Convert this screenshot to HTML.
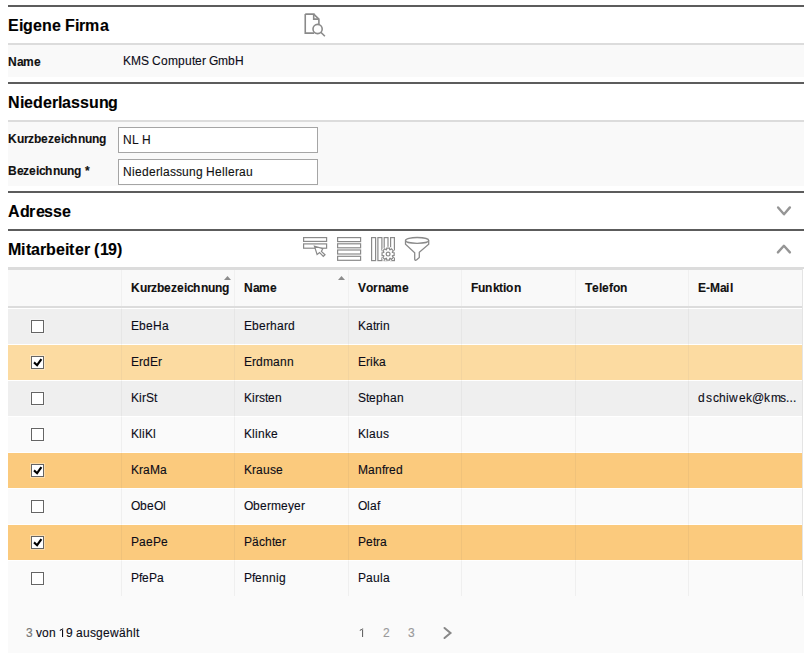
<!DOCTYPE html>
<html><head><meta charset="utf-8">
<style>
*{box-sizing:border-box}
html,body{margin:0;padding:0;background:#fff}
body{width:811px;height:657px;position:relative;overflow:hidden;font-family:"Liberation Sans",sans-serif;color:#1e1e1e}
.abs{position:absolute}
.t{position:absolute;white-space:nowrap}
.t i{display:inline-block;font-style:normal;text-align:left;overflow:visible}
.t{-webkit-text-stroke:0.12px currentColor}
.dline{position:absolute;left:8px;width:796px;height:2px;background:#5c5c5c}
.lline{position:absolute;left:8px;width:796px;height:2px;background:#dcdcdc}
.bg{position:absolute;left:8px;width:796px;background:#f9f9f9}
.inp{position:absolute;left:118px;width:200px;height:26px;border:1px solid #a5a5a5;background:#fff}
.cb{position:absolute;width:13px;height:13px;border:1px solid #656565;background:#fff;box-shadow:0 0 0 1px rgba(255,255,255,.35)}
</style></head><body>

<div class="dline" style="top:5px"></div>
<div class="t" style="left:8px;top:17px;font-size:16px;line-height:18px;font-weight:bold;color:#000;"><i style="width:11px">E</i><i style="width:4px">i</i><i style="width:10px">g</i><i style="width:9px">e</i><i style="width:10px">n</i><i style="width:8px">e</i><i style="width:5px">&nbsp;</i><i style="width:10px">F</i><i style="width:4px">i</i><i style="width:6px">r</i><i style="width:15px">m</i><i style="width:8px">a</i></div>
<svg class="abs" style="left:300px;top:10px" width="30" height="30" viewBox="0 0 30 30" fill="none" stroke="#8a8a8a" stroke-width="1.6">
 <path d="M13.7 4.1 L18.9 9.1 V14.6"/><path d="M5.25 4.1 H13.7 V9.1 H18.9"/><path d="M5.25 4.1 V23.1 H14.2"/>
 <circle cx="17.6" cy="19" r="4.6"/><path d="M20.8 22.2 L24.9 26.3"/>
</svg>
<div class="lline" style="top:43px"></div>
<div class="bg" style="top:45px;height:32px"></div>
<div class="t" style="left:8px;top:55px;font-size:12px;line-height:14px;font-weight:bold;color:#111;"><i style="width:9px">N</i><i style="width:6px">a</i><i style="width:11px">m</i><i style="width:6px">e</i></div>
<div class="t" style="left:123px;top:54px;font-size:12px;line-height:14px;color:#0c0c18;"><i style="width:8px">K</i><i style="width:10px">M</i><i style="width:8px">S</i><i style="width:3px">&nbsp;</i><i style="width:9px">C</i><i style="width:7px">o</i><i style="width:10px">m</i><i style="width:7px">p</i><i style="width:7px">u</i><i style="width:3px">t</i><i style="width:7px">e</i><i style="width:4px">r</i><i style="width:3px">&nbsp;</i><i style="width:9px">G</i><i style="width:10px">m</i><i style="width:7px">b</i><i style="width:9px">H</i></div>
<div class="dline" style="top:82px"></div>
<div class="t" style="left:8px;top:94px;font-size:16px;line-height:18px;font-weight:bold;color:#000;"><i style="width:12px">N</i><i style="width:4px">i</i><i style="width:9px">e</i><i style="width:10px">d</i><i style="width:9px">e</i><i style="width:6px">r</i><i style="width:4px">l</i><i style="width:9px">a</i><i style="width:9px">s</i><i style="width:9px">s</i><i style="width:10px">u</i><i style="width:9px">n</i><i style="width:10px">g</i></div>
<div class="lline" style="top:120px"></div>
<div class="bg" style="top:122px;height:64px"></div>
<div class="t" style="left:8px;top:132px;font-size:12px;line-height:14px;font-weight:bold;color:#111;"><i style="width:9px">K</i><i style="width:7px">u</i><i style="width:4px">r</i><i style="width:6px">z</i><i style="width:7px">b</i><i style="width:7px">e</i><i style="width:6px">z</i><i style="width:7px">e</i><i style="width:3px">i</i><i style="width:6px">c</i><i style="width:8px">h</i><i style="width:7px">n</i><i style="width:7px">u</i><i style="width:7px">n</i><i style="width:8px">g</i></div>
<div class="inp" style="top:127px"></div>
<div class="t" style="left:123px;top:133px;font-size:12px;line-height:14px;color:#111;"><i style="width:9px">N</i><i style="width:7px">L</i><i style="width:3px">&nbsp;</i><i style="width:9px">H</i></div>
<div class="t" style="left:8px;top:164px;font-size:12px;line-height:14px;font-weight:bold;color:#111;"><i style="width:9px">B</i><i style="width:6px">e</i><i style="width:6px">z</i><i style="width:7px">e</i><i style="width:3px">i</i><i style="width:6px">c</i><i style="width:8px">h</i><i style="width:7px">n</i><i style="width:7px">u</i><i style="width:7px">n</i><i style="width:8px">g</i><i style="width:3px">&nbsp;</i><i style="width:4px">*</i></div>
<div class="inp" style="top:159px"></div>
<div class="t" style="left:123px;top:165px;font-size:12px;line-height:14px;color:#111;"><i style="width:9px">N</i><i style="width:3px">i</i><i style="width:7px">e</i><i style="width:7px">d</i><i style="width:7px">e</i><i style="width:4px">r</i><i style="width:3px">l</i><i style="width:7px">a</i><i style="width:6px">s</i><i style="width:6px">s</i><i style="width:7px">u</i><i style="width:7px">n</i><i style="width:7px">g</i><i style="width:3px">&nbsp;</i><i style="width:9px">H</i><i style="width:7px">e</i><i style="width:3px">l</i><i style="width:3px">l</i><i style="width:7px">e</i><i style="width:4px">r</i><i style="width:7px">a</i><i style="width:7px">u</i></div>
<div class="dline" style="top:191px"></div>
<div class="t" style="left:8px;top:203px;font-size:16px;line-height:18px;font-weight:bold;color:#000;"><i style="width:12px">A</i><i style="width:9px">d</i><i style="width:7px">r</i><i style="width:8px">e</i><i style="width:9px">s</i><i style="width:9px">s</i><i style="width:9px">e</i></div>
<svg class="abs" style="left:772px;top:200px" width="24" height="24" viewBox="0 0 24 24" fill="none" stroke="#959595" stroke-width="2.4" stroke-linecap="round" stroke-linejoin="round"><path d="M6.1 7.5 L12 14.3 L17.9 7.4"/></svg>
<div class="dline" style="top:229px"></div>
<div class="t" style="left:8px;top:241px;font-size:16px;line-height:18px;font-weight:bold;color:#000;"><i style="width:13px">M</i><i style="width:5px">i</i><i style="width:5px">t</i><i style="width:9px">a</i><i style="width:6px">r</i><i style="width:10px">b</i><i style="width:9px">e</i><i style="width:4px">i</i><i style="width:6px">t</i><i style="width:9px">e</i><i style="width:6px">r</i><i style="width:4px">&nbsp;</i><i style="width:6px">(</i><i style="width:8px">1</i><i style="width:9px">9</i><i style="width:6px">)</i></div>
<svg class="abs" style="left:772px;top:236px" width="24" height="24" viewBox="0 0 24 24" fill="none" stroke="#959595" stroke-width="2.4" stroke-linecap="round" stroke-linejoin="round"><path d="M5.9 16.4 L11.9 9.8 L17.9 16.4"/></svg>
<svg class="abs" style="left:300px;top:234px" width="30" height="30" viewBox="0 0 30 30" fill="none" stroke="#8a8a8a" stroke-width="1.2">
 <rect x="3.6" y="3.6" width="23" height="3.8"/><rect x="3.6" y="9.9" width="23" height="4.3"/>
 <path d="M14.4 12.1 L17.1 20.5 L19.6 18.5 L23.3 22.3 L25 20.8 L21.4 17.4 L22.8 14.6 Z" fill="#fff"/>
</svg>
<svg class="abs" style="left:334px;top:234px" width="30" height="30" viewBox="0 0 30 30" fill="none" stroke="#8a8a8a" stroke-width="1.2">
 <rect x="3.6" y="3.6" width="23" height="4"/><rect x="3.6" y="9.8" width="23" height="4"/><rect x="3.6" y="16" width="23" height="4"/><rect x="3.6" y="22.3" width="23" height="4"/>
</svg>
<svg class="abs" style="left:368px;top:234px" width="30" height="30" viewBox="0 0 30 30" fill="none" stroke="#8a8a8a" stroke-width="1.2">
 <rect x="3.6" y="3.6" width="4" height="23"/><rect x="9.9" y="3.6" width="4" height="23"/><rect x="16.2" y="3.6" width="3.8" height="23"/><rect x="22.6" y="3.6" width="3.8" height="23"/>
 <circle cx="20.1" cy="20.1" r="7.4" fill="#fff" stroke="none"/>
 <path d="M24.41 18.48 L26.15 18.75 L26.15 21.45 L24.41 21.72 L24.29 22.00 L25.34 23.42 L23.42 25.34 L22.00 24.29 L21.72 24.41 L21.45 26.15 L18.75 26.15 L18.48 24.41 L18.20 24.29 L16.78 25.34 L14.86 23.42 L15.91 22.00 L15.79 21.72 L14.05 21.45 L14.05 18.75 L15.79 18.48 L15.91 18.20 L14.86 16.78 L16.78 14.86 L18.20 15.91 L18.48 15.79 L18.75 14.05 L21.45 14.05 L21.72 15.79 L22.00 15.91 L23.42 14.86 L25.34 16.78 L24.29 18.20 Z"/>
 <circle cx="20.1" cy="20.1" r="1.9"/>
</svg>
<svg class="abs" style="left:402px;top:234px" width="30" height="30" viewBox="0 0 30 30" fill="none" stroke="#8a8a8a" stroke-width="1.3">
 <ellipse cx="15.1" cy="6.4" rx="11.6" ry="2.9"/>
 <path d="M3.5 6.4 V10.3 L12.7 18.8 V25 Q12.7 26.8 14.5 26.0 L17.3 23.5 V18.3 L26.7 10.3 V6.4"/>
</svg>
<div class="lline" style="top:267px"></div>
<div class="abs" style="left:8px;top:269px;width:794px;height:1px;background:#dcdcdc"></div>
<div class="abs" style="left:8px;top:270px;width:794px;height:36px;background:#f9f9f9"></div>
<div class="abs" style="left:121px;top:270px;width:1px;height:36px;background:#f0f0f0"></div>
<div class="abs" style="left:234px;top:270px;width:1px;height:36px;background:#f0f0f0"></div>
<div class="abs" style="left:348px;top:270px;width:1px;height:36px;background:#f0f0f0"></div>
<div class="abs" style="left:461px;top:270px;width:1px;height:36px;background:#f0f0f0"></div>
<div class="abs" style="left:575px;top:270px;width:1px;height:36px;background:#f0f0f0"></div>
<div class="abs" style="left:688px;top:270px;width:1px;height:36px;background:#f0f0f0"></div>
<div class="abs" style="left:802px;top:269px;width:1px;height:327px;background:#e4e4e4"></div>
<div class="t" style="left:131px;top:281px;font-size:12px;line-height:14px;font-weight:bold;color:#111;"><i style="width:9px">K</i><i style="width:7px">u</i><i style="width:4px">r</i><i style="width:6px">z</i><i style="width:7px">b</i><i style="width:7px">e</i><i style="width:6px">z</i><i style="width:7px">e</i><i style="width:3px">i</i><i style="width:6px">c</i><i style="width:8px">h</i><i style="width:7px">n</i><i style="width:7px">u</i><i style="width:7px">n</i><i style="width:8px">g</i></div>
<div class="t" style="left:244px;top:281px;font-size:12px;line-height:14px;font-weight:bold;color:#111;"><i style="width:9px">N</i><i style="width:6px">a</i><i style="width:11px">m</i><i style="width:6px">e</i></div>
<div class="t" style="left:358px;top:281px;font-size:12px;line-height:14px;font-weight:bold;color:#111;"><i style="width:8px">V</i><i style="width:7px">o</i><i style="width:5px">r</i><i style="width:7px">n</i><i style="width:6px">a</i><i style="width:11px">m</i><i style="width:7px">e</i></div>
<div class="t" style="left:471px;top:281px;font-size:12px;line-height:14px;font-weight:bold;color:#111;"><i style="width:7px">F</i><i style="width:7px">u</i><i style="width:8px">n</i><i style="width:6px">k</i><i style="width:4px">t</i><i style="width:3px">i</i><i style="width:8px">o</i><i style="width:7px">n</i></div>
<div class="t" style="left:585px;top:281px;font-size:12px;line-height:14px;font-weight:bold;color:#111;"><i style="width:7px">T</i><i style="width:7px">e</i><i style="width:3px">l</i><i style="width:7px">e</i><i style="width:4px">f</i><i style="width:7px">o</i><i style="width:7px">n</i></div>
<div class="t" style="left:698px;top:281px;font-size:12px;line-height:14px;font-weight:bold;color:#111;"><i style="width:8px">E</i><i style="width:4px">-</i><i style="width:10px">M</i><i style="width:6px">a</i><i style="width:4px">i</i><i style="width:3px">l</i></div>
<svg class="abs" style="left:224px;top:275px" width="8" height="6" viewBox="0 0 8 6"><path d="M0 5 L3.5 1 L7 5 Z" fill="#8c8c8c"/></svg>
<svg class="abs" style="left:338px;top:275px" width="8" height="6" viewBox="0 0 8 6"><path d="M0 5 L3.5 1 L7 5 Z" fill="#8c8c8c"/></svg>
<div class="abs" style="left:8px;top:306px;width:794px;height:2px;background:#dcdcdc"></div>
<div class="abs" style="left:8px;top:308px;width:794px;height:1px;background:#fff"></div>
<div class="abs" style="left:8px;top:309px;width:794px;height:35px;background:#efefef"></div>
<div class="abs" style="left:121px;top:308px;width:1px;height:1px;background:#f6f6f6"></div>
<div class="abs" style="left:121px;top:309px;width:1px;height:35px;background:#e6e6e6"></div>
<div class="abs" style="left:234px;top:308px;width:1px;height:1px;background:#f6f6f6"></div>
<div class="abs" style="left:234px;top:309px;width:1px;height:35px;background:#e6e6e6"></div>
<div class="abs" style="left:348px;top:308px;width:1px;height:1px;background:#f6f6f6"></div>
<div class="abs" style="left:348px;top:309px;width:1px;height:35px;background:#e6e6e6"></div>
<div class="abs" style="left:461px;top:308px;width:1px;height:1px;background:#f6f6f6"></div>
<div class="abs" style="left:461px;top:309px;width:1px;height:35px;background:#e6e6e6"></div>
<div class="abs" style="left:575px;top:308px;width:1px;height:1px;background:#f6f6f6"></div>
<div class="abs" style="left:575px;top:309px;width:1px;height:35px;background:#e6e6e6"></div>
<div class="abs" style="left:688px;top:308px;width:1px;height:1px;background:#f6f6f6"></div>
<div class="abs" style="left:688px;top:309px;width:1px;height:35px;background:#e6e6e6"></div>
<div class="cb" style="left:31px;top:320px"></div>
<div class="t" style="left:131px;top:319px;font-size:12px;line-height:14px;color:#0c0c18;"><i style="width:8px">E</i><i style="width:7px">b</i><i style="width:7px">e</i><i style="width:9px">H</i><i style="width:7px">a</i></div>
<div class="t" style="left:244px;top:319px;font-size:12px;line-height:14px;color:#0c0c18;"><i style="width:8px">E</i><i style="width:7px">b</i><i style="width:7px">e</i><i style="width:4px">r</i><i style="width:7px">h</i><i style="width:7px">a</i><i style="width:4px">r</i><i style="width:7px">d</i></div>
<div class="t" style="left:358px;top:319px;font-size:12px;line-height:14px;color:#0c0c18;"><i style="width:8px">K</i><i style="width:7px">a</i><i style="width:3px">t</i><i style="width:4px">r</i><i style="width:3px">i</i><i style="width:7px">n</i></div>
<div class="abs" style="left:8px;top:344px;width:794px;height:1px;background:#fff"></div>
<div class="abs" style="left:8px;top:345px;width:794px;height:35px;background:#fcdba1"></div>
<div class="abs" style="left:121px;top:344px;width:1px;height:1px;background:#f6f6f6"></div>
<div class="abs" style="left:121px;top:345px;width:1px;height:35px;background:#f3d49f"></div>
<div class="abs" style="left:234px;top:344px;width:1px;height:1px;background:#f6f6f6"></div>
<div class="abs" style="left:234px;top:345px;width:1px;height:35px;background:#f3d49f"></div>
<div class="abs" style="left:348px;top:344px;width:1px;height:1px;background:#f6f6f6"></div>
<div class="abs" style="left:348px;top:345px;width:1px;height:35px;background:#f3d49f"></div>
<div class="abs" style="left:461px;top:344px;width:1px;height:1px;background:#f6f6f6"></div>
<div class="abs" style="left:461px;top:345px;width:1px;height:35px;background:#f3d49f"></div>
<div class="abs" style="left:575px;top:344px;width:1px;height:1px;background:#f6f6f6"></div>
<div class="abs" style="left:575px;top:345px;width:1px;height:35px;background:#f3d49f"></div>
<div class="abs" style="left:688px;top:344px;width:1px;height:1px;background:#f6f6f6"></div>
<div class="abs" style="left:688px;top:345px;width:1px;height:35px;background:#f3d49f"></div>
<div class="cb" style="left:31px;top:356px"><svg class="abs" style="left:-1px;top:-1px" width="13" height="13" viewBox="0 0 13 13"><path d="M3 6.4 L6.1 9.2 L10.4 3.1" fill="none" stroke="#000" stroke-width="2.1"/></svg></div>
<div class="t" style="left:131px;top:355px;font-size:12px;line-height:14px;color:#0c0c18;"><i style="width:8px">E</i><i style="width:4px">r</i><i style="width:7px">d</i><i style="width:8px">E</i><i style="width:4px">r</i></div>
<div class="t" style="left:244px;top:355px;font-size:12px;line-height:14px;color:#0c0c18;"><i style="width:8px">E</i><i style="width:4px">r</i><i style="width:7px">d</i><i style="width:10px">m</i><i style="width:7px">a</i><i style="width:7px">n</i><i style="width:7px">n</i></div>
<div class="t" style="left:358px;top:355px;font-size:12px;line-height:14px;color:#0c0c18;"><i style="width:8px">E</i><i style="width:4px">r</i><i style="width:3px">i</i><i style="width:6px">k</i><i style="width:7px">a</i></div>
<div class="abs" style="left:8px;top:380px;width:794px;height:1px;background:#fff"></div>
<div class="abs" style="left:8px;top:381px;width:794px;height:35px;background:#efefef"></div>
<div class="abs" style="left:121px;top:380px;width:1px;height:1px;background:#f6f6f6"></div>
<div class="abs" style="left:121px;top:381px;width:1px;height:35px;background:#e6e6e6"></div>
<div class="abs" style="left:234px;top:380px;width:1px;height:1px;background:#f6f6f6"></div>
<div class="abs" style="left:234px;top:381px;width:1px;height:35px;background:#e6e6e6"></div>
<div class="abs" style="left:348px;top:380px;width:1px;height:1px;background:#f6f6f6"></div>
<div class="abs" style="left:348px;top:381px;width:1px;height:35px;background:#e6e6e6"></div>
<div class="abs" style="left:461px;top:380px;width:1px;height:1px;background:#f6f6f6"></div>
<div class="abs" style="left:461px;top:381px;width:1px;height:35px;background:#e6e6e6"></div>
<div class="abs" style="left:575px;top:380px;width:1px;height:1px;background:#f6f6f6"></div>
<div class="abs" style="left:575px;top:381px;width:1px;height:35px;background:#e6e6e6"></div>
<div class="abs" style="left:688px;top:380px;width:1px;height:1px;background:#f6f6f6"></div>
<div class="abs" style="left:688px;top:381px;width:1px;height:35px;background:#e6e6e6"></div>
<div class="cb" style="left:31px;top:392px"></div>
<div class="t" style="left:131px;top:391px;font-size:12px;line-height:14px;color:#0c0c18;"><i style="width:8px">K</i><i style="width:3px">i</i><i style="width:4px">r</i><i style="width:8px">S</i><i style="width:3px">t</i></div>
<div class="t" style="left:244px;top:391px;font-size:12px;line-height:14px;color:#0c0c18;"><i style="width:8px">K</i><i style="width:3px">i</i><i style="width:4px">r</i><i style="width:6px">s</i><i style="width:3px">t</i><i style="width:7px">e</i><i style="width:7px">n</i></div>
<div class="t" style="left:358px;top:391px;font-size:12px;line-height:14px;color:#0c0c18;"><i style="width:8px">S</i><i style="width:3px">t</i><i style="width:7px">e</i><i style="width:7px">p</i><i style="width:7px">h</i><i style="width:7px">a</i><i style="width:7px">n</i></div>
<div class="t" style="left:698px;top:391px;font-size:12px;line-height:14px;color:#0c0c18"><i style="width:8px">d</i><i style="width:7px">s</i><i style="width:6px">c</i><i style="width:7px">h</i><i style="width:3px">i</i><i style="width:10px">w</i><i style="width:7px">e</i><i style="width:6px">k</i><i style="width:12px">@</i><i style="width:7px">k</i><i style="width:9px">m</i><i style="width:6px">s</i><i style="width:3.5px">.</i><i style="width:3.5px">.</i><i style="width:3.5px">.</i></div>
<div class="abs" style="left:8px;top:416px;width:794px;height:1px;background:#fff"></div>
<div class="abs" style="left:8px;top:417px;width:794px;height:35px;background:#fafafa"></div>
<div class="abs" style="left:121px;top:416px;width:1px;height:1px;background:#f6f6f6"></div>
<div class="abs" style="left:121px;top:417px;width:1px;height:35px;background:#efefef"></div>
<div class="abs" style="left:234px;top:416px;width:1px;height:1px;background:#f6f6f6"></div>
<div class="abs" style="left:234px;top:417px;width:1px;height:35px;background:#efefef"></div>
<div class="abs" style="left:348px;top:416px;width:1px;height:1px;background:#f6f6f6"></div>
<div class="abs" style="left:348px;top:417px;width:1px;height:35px;background:#efefef"></div>
<div class="abs" style="left:461px;top:416px;width:1px;height:1px;background:#f6f6f6"></div>
<div class="abs" style="left:461px;top:417px;width:1px;height:35px;background:#efefef"></div>
<div class="abs" style="left:575px;top:416px;width:1px;height:1px;background:#f6f6f6"></div>
<div class="abs" style="left:575px;top:417px;width:1px;height:35px;background:#efefef"></div>
<div class="abs" style="left:688px;top:416px;width:1px;height:1px;background:#f6f6f6"></div>
<div class="abs" style="left:688px;top:417px;width:1px;height:35px;background:#efefef"></div>
<div class="cb" style="left:31px;top:428px"></div>
<div class="t" style="left:131px;top:427px;font-size:12px;line-height:14px;color:#0c0c18;"><i style="width:8px">K</i><i style="width:3px">l</i><i style="width:3px">i</i><i style="width:8px">K</i><i style="width:3px">l</i></div>
<div class="t" style="left:244px;top:427px;font-size:12px;line-height:14px;color:#0c0c18;"><i style="width:8px">K</i><i style="width:3px">l</i><i style="width:3px">i</i><i style="width:7px">n</i><i style="width:6px">k</i><i style="width:7px">e</i></div>
<div class="t" style="left:358px;top:427px;font-size:12px;line-height:14px;color:#0c0c18;"><i style="width:8px">K</i><i style="width:3px">l</i><i style="width:7px">a</i><i style="width:7px">u</i><i style="width:6px">s</i></div>
<div class="abs" style="left:8px;top:452px;width:794px;height:1px;background:#fff"></div>
<div class="abs" style="left:8px;top:453px;width:794px;height:35px;background:#fbca7d"></div>
<div class="abs" style="left:121px;top:452px;width:1px;height:1px;background:#f6f6f6"></div>
<div class="abs" style="left:121px;top:453px;width:1px;height:35px;background:#f0c27a"></div>
<div class="abs" style="left:234px;top:452px;width:1px;height:1px;background:#f6f6f6"></div>
<div class="abs" style="left:234px;top:453px;width:1px;height:35px;background:#f0c27a"></div>
<div class="abs" style="left:348px;top:452px;width:1px;height:1px;background:#f6f6f6"></div>
<div class="abs" style="left:348px;top:453px;width:1px;height:35px;background:#f0c27a"></div>
<div class="abs" style="left:461px;top:452px;width:1px;height:1px;background:#f6f6f6"></div>
<div class="abs" style="left:461px;top:453px;width:1px;height:35px;background:#f0c27a"></div>
<div class="abs" style="left:575px;top:452px;width:1px;height:1px;background:#f6f6f6"></div>
<div class="abs" style="left:575px;top:453px;width:1px;height:35px;background:#f0c27a"></div>
<div class="abs" style="left:688px;top:452px;width:1px;height:1px;background:#f6f6f6"></div>
<div class="abs" style="left:688px;top:453px;width:1px;height:35px;background:#f0c27a"></div>
<div class="cb" style="left:31px;top:464px"><svg class="abs" style="left:-1px;top:-1px" width="13" height="13" viewBox="0 0 13 13"><path d="M3 6.4 L6.1 9.2 L10.4 3.1" fill="none" stroke="#000" stroke-width="2.1"/></svg></div>
<div class="t" style="left:131px;top:463px;font-size:12px;line-height:14px;color:#0c0c18;"><i style="width:8px">K</i><i style="width:4px">r</i><i style="width:7px">a</i><i style="width:10px">M</i><i style="width:7px">a</i></div>
<div class="t" style="left:244px;top:463px;font-size:12px;line-height:14px;color:#0c0c18;"><i style="width:8px">K</i><i style="width:4px">r</i><i style="width:7px">a</i><i style="width:7px">u</i><i style="width:6px">s</i><i style="width:7px">e</i></div>
<div class="t" style="left:358px;top:463px;font-size:12px;line-height:14px;color:#0c0c18;"><i style="width:10px">M</i><i style="width:7px">a</i><i style="width:7px">n</i><i style="width:3px">f</i><i style="width:4px">r</i><i style="width:7px">e</i><i style="width:7px">d</i></div>
<div class="abs" style="left:8px;top:488px;width:794px;height:1px;background:#fff"></div>
<div class="abs" style="left:8px;top:489px;width:794px;height:35px;background:#fafafa"></div>
<div class="abs" style="left:121px;top:488px;width:1px;height:1px;background:#f6f6f6"></div>
<div class="abs" style="left:121px;top:489px;width:1px;height:35px;background:#efefef"></div>
<div class="abs" style="left:234px;top:488px;width:1px;height:1px;background:#f6f6f6"></div>
<div class="abs" style="left:234px;top:489px;width:1px;height:35px;background:#efefef"></div>
<div class="abs" style="left:348px;top:488px;width:1px;height:1px;background:#f6f6f6"></div>
<div class="abs" style="left:348px;top:489px;width:1px;height:35px;background:#efefef"></div>
<div class="abs" style="left:461px;top:488px;width:1px;height:1px;background:#f6f6f6"></div>
<div class="abs" style="left:461px;top:489px;width:1px;height:35px;background:#efefef"></div>
<div class="abs" style="left:575px;top:488px;width:1px;height:1px;background:#f6f6f6"></div>
<div class="abs" style="left:575px;top:489px;width:1px;height:35px;background:#efefef"></div>
<div class="abs" style="left:688px;top:488px;width:1px;height:1px;background:#f6f6f6"></div>
<div class="abs" style="left:688px;top:489px;width:1px;height:35px;background:#efefef"></div>
<div class="cb" style="left:31px;top:500px"></div>
<div class="t" style="left:131px;top:499px;font-size:12px;line-height:14px;color:#0c0c18;"><i style="width:9px">O</i><i style="width:7px">b</i><i style="width:7px">e</i><i style="width:9px">O</i><i style="width:3px">l</i></div>
<div class="t" style="left:244px;top:499px;font-size:12px;line-height:14px;color:#0c0c18;"><i style="width:9px">O</i><i style="width:7px">b</i><i style="width:7px">e</i><i style="width:4px">r</i><i style="width:10px">m</i><i style="width:7px">e</i><i style="width:6px">y</i><i style="width:7px">e</i><i style="width:4px">r</i></div>
<div class="t" style="left:358px;top:499px;font-size:12px;line-height:14px;color:#0c0c18;"><i style="width:9px">O</i><i style="width:3px">l</i><i style="width:7px">a</i><i style="width:3px">f</i></div>
<div class="abs" style="left:8px;top:524px;width:794px;height:1px;background:#fff"></div>
<div class="abs" style="left:8px;top:525px;width:794px;height:35px;background:#fbca7d"></div>
<div class="abs" style="left:121px;top:524px;width:1px;height:1px;background:#f6f6f6"></div>
<div class="abs" style="left:121px;top:525px;width:1px;height:35px;background:#f0c27a"></div>
<div class="abs" style="left:234px;top:524px;width:1px;height:1px;background:#f6f6f6"></div>
<div class="abs" style="left:234px;top:525px;width:1px;height:35px;background:#f0c27a"></div>
<div class="abs" style="left:348px;top:524px;width:1px;height:1px;background:#f6f6f6"></div>
<div class="abs" style="left:348px;top:525px;width:1px;height:35px;background:#f0c27a"></div>
<div class="abs" style="left:461px;top:524px;width:1px;height:1px;background:#f6f6f6"></div>
<div class="abs" style="left:461px;top:525px;width:1px;height:35px;background:#f0c27a"></div>
<div class="abs" style="left:575px;top:524px;width:1px;height:1px;background:#f6f6f6"></div>
<div class="abs" style="left:575px;top:525px;width:1px;height:35px;background:#f0c27a"></div>
<div class="abs" style="left:688px;top:524px;width:1px;height:1px;background:#f6f6f6"></div>
<div class="abs" style="left:688px;top:525px;width:1px;height:35px;background:#f0c27a"></div>
<div class="cb" style="left:31px;top:536px"><svg class="abs" style="left:-1px;top:-1px" width="13" height="13" viewBox="0 0 13 13"><path d="M3 6.4 L6.1 9.2 L10.4 3.1" fill="none" stroke="#000" stroke-width="2.1"/></svg></div>
<div class="t" style="left:131px;top:535px;font-size:12px;line-height:14px;color:#0c0c18;"><i style="width:8px">P</i><i style="width:7px">a</i><i style="width:7px">e</i><i style="width:8px">P</i><i style="width:7px">e</i></div>
<div class="t" style="left:244px;top:535px;font-size:12px;line-height:14px;color:#0c0c18;"><i style="width:8px">P</i><i style="width:7px">ä</i><i style="width:6px">c</i><i style="width:7px">h</i><i style="width:3px">t</i><i style="width:7px">e</i><i style="width:4px">r</i></div>
<div class="t" style="left:358px;top:535px;font-size:12px;line-height:14px;color:#0c0c18;"><i style="width:8px">P</i><i style="width:7px">e</i><i style="width:3px">t</i><i style="width:4px">r</i><i style="width:7px">a</i></div>
<div class="abs" style="left:8px;top:560px;width:794px;height:1px;background:#fff"></div>
<div class="abs" style="left:8px;top:561px;width:794px;height:35px;background:#fafafa"></div>
<div class="abs" style="left:121px;top:560px;width:1px;height:1px;background:#f6f6f6"></div>
<div class="abs" style="left:121px;top:561px;width:1px;height:35px;background:#efefef"></div>
<div class="abs" style="left:234px;top:560px;width:1px;height:1px;background:#f6f6f6"></div>
<div class="abs" style="left:234px;top:561px;width:1px;height:35px;background:#efefef"></div>
<div class="abs" style="left:348px;top:560px;width:1px;height:1px;background:#f6f6f6"></div>
<div class="abs" style="left:348px;top:561px;width:1px;height:35px;background:#efefef"></div>
<div class="abs" style="left:461px;top:560px;width:1px;height:1px;background:#f6f6f6"></div>
<div class="abs" style="left:461px;top:561px;width:1px;height:35px;background:#efefef"></div>
<div class="abs" style="left:575px;top:560px;width:1px;height:1px;background:#f6f6f6"></div>
<div class="abs" style="left:575px;top:561px;width:1px;height:35px;background:#efefef"></div>
<div class="abs" style="left:688px;top:560px;width:1px;height:1px;background:#f6f6f6"></div>
<div class="abs" style="left:688px;top:561px;width:1px;height:35px;background:#efefef"></div>
<div class="cb" style="left:31px;top:572px"></div>
<div class="t" style="left:131px;top:571px;font-size:12px;line-height:14px;color:#0c0c18;"><i style="width:8px">P</i><i style="width:3px">f</i><i style="width:7px">e</i><i style="width:8px">P</i><i style="width:7px">a</i></div>
<div class="t" style="left:244px;top:571px;font-size:12px;line-height:14px;color:#0c0c18;"><i style="width:8px">P</i><i style="width:3px">f</i><i style="width:7px">e</i><i style="width:7px">n</i><i style="width:7px">n</i><i style="width:3px">i</i><i style="width:7px">g</i></div>
<div class="t" style="left:358px;top:571px;font-size:12px;line-height:14px;color:#0c0c18;"><i style="width:8px">P</i><i style="width:7px">a</i><i style="width:7px">u</i><i style="width:3px">l</i><i style="width:7px">a</i></div>
<div class="abs" style="left:8px;top:596px;width:796px;height:57px;background:#fafafa"></div>
<div class="t" style="left:26px;top:626px;font-size:12px;line-height:14px;color:#0c0c18"><span style="color:#777"><i style="width:7px">3</i></span><i style="width:3px">&nbsp;</i><i style="width:6px">v</i><i style="width:7px">o</i><i style="width:7px">n</i><i style="width:3px">&nbsp;</i><i style="width:7px;position:relative"><span style="visibility:hidden">1</span><svg style="position:absolute;left:0;top:2px" width="7" height="9" viewBox="0 0 7 9"><path d="M3 0 H4.1 V9 H3 Z M3.2 0.1 L0.6 2.2 L1 3.1 L4 1.1 Z" fill="currentColor"/></svg></i><i style="width:7px">9</i><i style="width:3px">&nbsp;</i><i style="width:7px">a</i><i style="width:7px">u</i><i style="width:6px">s</i><i style="width:7px">g</i><i style="width:7px">e</i><i style="width:9px">w</i><i style="width:7px">ä</i><i style="width:7px">h</i><i style="width:3px">l</i><i style="width:3px">t</i></div>
<div class="t" style="left:359px;top:626px;font-size:12px;line-height:14px;color:#666;"><i style="width:7px;position:relative"><span style="visibility:hidden">1</span><svg style="position:absolute;left:0;top:2px" width="7" height="9" viewBox="0 0 7 9"><path d="M3 0 H4.1 V9 H3 Z M3.2 0.1 L0.6 2.2 L1 3.1 L4 1.1 Z" fill="currentColor"/></svg></i></div>
<div class="t" style="left:383px;top:626px;font-size:12px;line-height:14px;color:#999;"><i style="width:7px">2</i></div>
<div class="t" style="left:408px;top:626px;font-size:12px;line-height:14px;color:#999;"><i style="width:7px">3</i></div>
<svg class="abs" style="left:440px;top:625px" width="16" height="16" viewBox="0 0 16 16" fill="none" stroke="#888" stroke-width="2" stroke-linecap="round"><path d="M4.5 3 L10.5 8 L4.5 13"/></svg>
</body></html>
